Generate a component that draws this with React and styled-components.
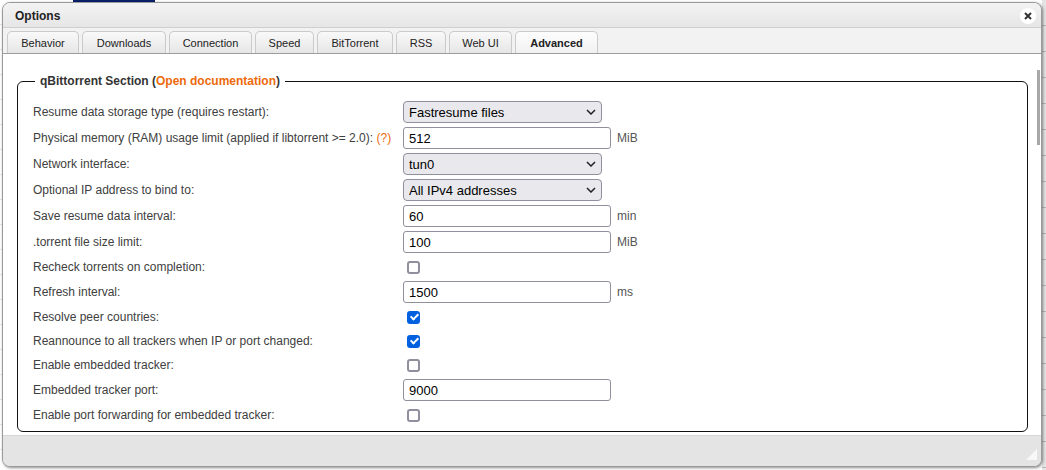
import React from "react"
import styled, { createGlobalStyle } from "styled-components"

const GlobalStyle = createGlobalStyle`
  html, body {
    margin: 0;
    padding: 0;
    background: #fff;
    font-family: "Liberation Sans", Arial, sans-serif;
  }
`

const Page = styled.div`
  position: relative;
  width: 1046px;
  height: 470px;
  overflow: hidden;
  padding: 2px 0 0 2px;
  box-sizing: border-box;
  background: #fafafa;
`

// bits of the torrent list that peek out behind the dialog
const Backdrop = styled.div`
  position: absolute;
  inset: 0;
  background: repeating-linear-gradient(#fff 0 24px, #e6e6e6 24px 25px);
`
const SelectedCell = styled.div`
  position: absolute;
  left: 73px;
  top: 0;
  width: 82px;
  height: 3px;
  background: #0a1f6b;
`
const RightStrip = styled.div`
  position: absolute;
  right: 0;
  top: 0;
  width: 4px;
  height: 470px;
  background: repeating-linear-gradient(#e4e4e4 0 25px, #b8b8b8 25px 26px);
`

const Window = styled.div`
  position: relative;
  width: 1040px;
  height: 465px;
  box-sizing: border-box;
  display: flex;
  flex-direction: column;
  border: 1px solid #9a9a9a;
  border-radius: 8px;
  background: #f2f2f2;
  box-shadow: 1px 1px 3px rgba(0, 0, 0, 0.45);
  overflow: hidden;
`

const TitleBar = styled.div`
  height: 25px;
  flex: none;
  display: flex;
  align-items: center;
  justify-content: space-between;
  padding: 1px 5px 0 12px;
  box-sizing: border-box;
  background: linear-gradient(#f3f3f3, #e6e6e6);
  border-bottom: 1px solid #cfcfcf;
`
const Title = styled.div`
  font-size: 12px;
  font-weight: bold;
  color: #222;
`
const CloseButton = styled.div`
  width: 16px;
  height: 16px;
  border-radius: 50%;
  background: #fff;
  display: flex;
  align-items: center;
  justify-content: center;
`

const TabStrip = styled.div`
  height: 22px;
  flex: none;
  display: flex;
  gap: 3px;
  padding: 3px 0 0 4px;
  background: #f2f2f2;
  border-bottom: 1px solid #9d9d9d;
`
const Tab = styled.div`
  width: ${(p) => p.$w}px;
  height: 22px;
  box-sizing: border-box;
  display: flex;
  align-items: center;
  justify-content: center;
  font-size: 11px;
  font-weight: ${(p) => (p.$active ? "bold" : "normal")};
  color: #222;
  border: 1px solid #cacaca;
  border-bottom: none;
  border-radius: 5px 5px 0 0;
  background: ${(p) =>
    p.$active
      ? "linear-gradient(#fdfdfd, #f1f1f1)"
      : "linear-gradient(#f9f9f9, #e6e6e6)"};
`

const Content = styled.div`
  position: relative;
  height: 381px;
  flex: none;
  box-sizing: border-box;
  padding: 20px 13px 0 14px;
  background: #fff;
  overflow: hidden;
`
const ScrollThumb = styled.div`
  position: absolute;
  right: 1px;
  top: 16px;
  width: 3px;
  height: 75px;
  background: #a8a8a8;
`

const Section = styled.fieldset`
  margin: 0;
  padding: 11px 15px 4px 15px;
  border: 1px solid #111;
  border-radius: 6px;
`
const Legend = styled.legend`
  margin-left: 2px;
  padding: 0 5px;
  font-size: 12px;
  line-height: 14px;
  font-weight: bold;
  color: #333;
`
const Link = styled.span`
  color: #ec6a0c;
`

const Row = styled.div`
  height: ${(p) => p.$h}px;
  display: flex;
  align-items: center;
`
const Label = styled.div`
  width: 370px;
  flex: none;
  font-size: 12px;
  color: #404040;
`
const Help = styled.span`
  color: #ec6a0c;
`

const SelectBox = styled.div`
  position: relative;
  width: 199px;
  height: 22px;
`
const Select = styled.select`
  appearance: none;
  width: 100%;
  height: 100%;
  box-sizing: border-box;
  margin: 0;
  padding: 0 0 0 5px;
  border: 1px solid #8f8f9d;
  border-radius: 4px;
  background: #e9e9ed;
  font: 13px "Liberation Sans", Arial, sans-serif;
  color: #000;
`
const Chevron = styled.svg`
  position: absolute;
  right: 6px;
  top: 8px;
  pointer-events: none;
`

const TextInput = styled.input`
  width: 208px;
  height: 22px;
  box-sizing: border-box;
  margin: 0;
  padding: 0 5px;
  border: 1px solid #8f8f9d;
  border-radius: 3px;
  font: 13px "Liberation Sans", Arial, sans-serif;
  color: #000;
`
const Unit = styled.span`
  margin-left: 6px;
  font-size: 12px;
  color: #555;
`

const Check = styled.input`
  appearance: none;
  position: relative;
  width: 13px;
  height: 13px;
  box-sizing: border-box;
  margin: 0 0 0 4px;
  border: 2px solid #8f8f9d;
  border-radius: 3px;
  background: #fff;
  &:checked {
    background: #0060df;
    border-color: #0060df;
  }
  &:checked::after {
    content: "";
    position: absolute;
    left: 2.5px;
    top: -0.5px;
    width: 3px;
    height: 6px;
    border: solid #fff;
    border-width: 0 2px 2px 0;
    transform: rotate(45deg);
  }
`

const Footer = styled.div`
  position: relative;
  flex: 1;
  background: #e4e4e4;
  border-top: 1px solid #d6d6d6;
`
const Grip = styled.div`
  position: absolute;
  right: 4px;
  bottom: 6px;
  width: 0;
  height: 0;
  border-left: 11px solid transparent;
  border-bottom: 11px solid #f8f8f8;
`

const rows = [
  { label: "Resume data storage type (requires restart):", type: "select", value: "Fastresume files" },
  { label: "Physical memory (RAM) usage limit (applied if libtorrent >= 2.0):", help: true, type: "input", value: "512", unit: "MiB" },
  { label: "Network interface:", type: "select", value: "tun0" },
  { label: "Optional IP address to bind to:", type: "select", value: "All IPv4 addresses" },
  { label: "Save resume data interval:", type: "input", value: "60", unit: "min" },
  { label: ".torrent file size limit:", type: "input", value: "100", unit: "MiB" },
  { label: "Recheck torrents on completion:", type: "check", checked: false },
  { label: "Refresh interval:", type: "input", value: "1500", unit: "ms" },
  { label: "Resolve peer countries:", type: "check", checked: true },
  { label: "Reannounce to all trackers when IP or port changed:", type: "check", checked: true },
  { label: "Enable embedded tracker:", type: "check", checked: false },
  { label: "Embedded tracker port:", type: "input", value: "9000" },
  { label: "Enable port forwarding for embedded tracker:", type: "check", checked: false },
]

const tabs = [
  { name: "Behavior", w: 72 },
  { name: "Downloads", w: 84 },
  { name: "Connection", w: 83 },
  { name: "Speed", w: 59 },
  { name: "BitTorrent", w: 76 },
  { name: "RSS", w: 50 },
  { name: "Web UI", w: 63 },
  { name: "Advanced", w: 83 },
]

const Control = ({ row }) => {
  if (row.type === "select") {
    return (
      <SelectBox>
        <Select defaultValue={row.value}>
          <option>{row.value}</option>
        </Select>
        <Chevron width="10" height="6" viewBox="0 0 10 6">
          <path d="M1 1 L5 5 L9 1" fill="none" stroke="#222" strokeWidth="1.5" />
        </Chevron>
      </SelectBox>
    )
  }
  if (row.type === "input") {
    return (
      <>
        <TextInput type="text" defaultValue={row.value} />
        {row.unit && <Unit>{row.unit}</Unit>}
      </>
    )
  }
  return <Check type="checkbox" defaultChecked={row.checked} />
}

const App = () => {
  return (
    <Page>
      <GlobalStyle />
      <Backdrop />
      <SelectedCell />
      <RightStrip />
      <Window>
        <TitleBar>
          <Title>Options</Title>
          <CloseButton>
            <svg width="8" height="8" viewBox="0 0 8 8">
              <path d="M1 1 L7 7 M7 1 L1 7" stroke="#333" strokeWidth="2" />
            </svg>
          </CloseButton>
        </TitleBar>
        <TabStrip>
          {tabs.map((t) => (
            <Tab key={t.name} $w={t.w} $active={t.name === "Advanced"}>
              {t.name}
            </Tab>
          ))}
        </TabStrip>
        <Content>
          <ScrollThumb />
          <Section>
            <Legend>
              qBittorrent Section (<Link>Open documentation</Link>)
            </Legend>
            {rows.map((r) => (
              <Row key={r.label} $h={r.type === "check" ? 24 : 26}>
                <Label>
                  {r.label}
                  {r.help && <Help> (?)</Help>}
                </Label>
                <Control row={r} />
              </Row>
            ))}
          </Section>
        </Content>
        <Footer>
          <Grip />
        </Footer>
      </Window>
    </Page>
  )
}

export default App
